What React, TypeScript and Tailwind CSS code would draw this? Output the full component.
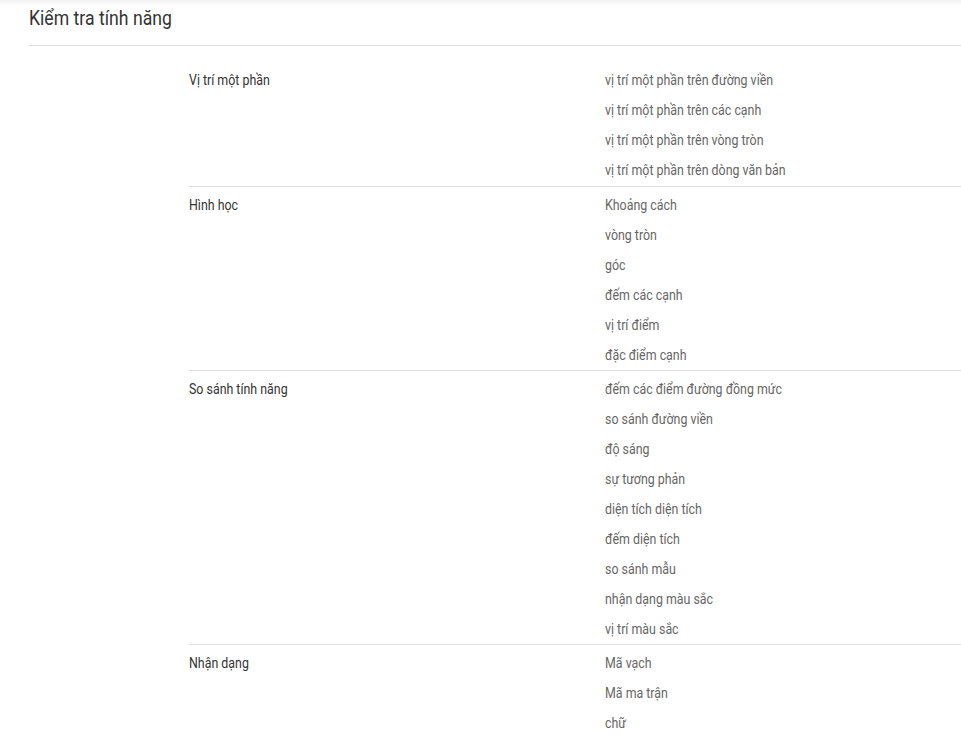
import React from "react";

const sections: { label: string; items: string[] }[] = [
  {
    label: "Vị trí một phần",
    items: [
      "vị trí một phần trên đường viền",
      "vị trí một phần trên các cạnh",
      "vị trí một phần trên vòng tròn",
      "vị trí một phần trên dòng văn bản",
    ],
  },
  {
    label: "Hình học",
    items: ["Khoảng cách", "vòng tròn", "góc", "đếm các cạnh", "vị trí điểm", "đặc điểm cạnh"],
  },
  {
    label: "So sánh tính năng",
    items: [
      "đếm các điểm đường đồng mức",
      "so sánh đường viền",
      "độ sáng",
      "sự tương phản",
      "diện tích diện tích",
      "đếm diện tích",
      "so sánh mẫu",
      "nhận dạng màu sắc",
      "vị trí màu sắc",
    ],
  },
  {
    label: "Nhận dạng",
    items: ["Mã vạch", "Mã ma trận", "chữ"],
  },
];

export default function App() {
  return (
    <div
      className="min-h-[753px] bg-white relative"
      style={{ fontFamily: "Roboto, 'Noto Sans', sans-serif" }}
    >
      <div className="absolute top-0 left-0 right-0 h-[6px] bg-gradient-to-b from-[#f2f2f2] to-white" />
      <div className="pl-[29px]">
        <div className="h-[46px] border-b border-[#e0e0e0] flex items-center">
          <h1 className="text-[20px] text-[#333] leading-none -mt-[9px]">
            <span className="inline-block origin-left scale-x-[0.882] whitespace-nowrap">
              Kiểm tra tính năng
            </span>
          </h1>
        </div>
      </div>
      <div className="pl-[189px] pt-[19px]">
        {sections.map((s, i) => (
          <div
            key={s.label}
            className={`flex ${i > 0 ? "border-t border-[#e0e0e0] pt-[3px]" : "pb-px"}`}
          >
            <div className="w-[416px] h-[30px] flex items-center text-[14px] text-[#333]">
              <span className="inline-block origin-left scale-x-[0.885] whitespace-nowrap">
                {s.label}
              </span>
            </div>
            <div className="flex flex-col">
              {s.items.map((it) => (
                <div key={it} className="h-[30px] flex items-center text-[14px] text-[#666]">
                  <span className="inline-block origin-left scale-x-[0.885] whitespace-nowrap">
                    {it}
                  </span>
                </div>
              ))}
            </div>
          </div>
        ))}
      </div>
    </div>
  );
}
